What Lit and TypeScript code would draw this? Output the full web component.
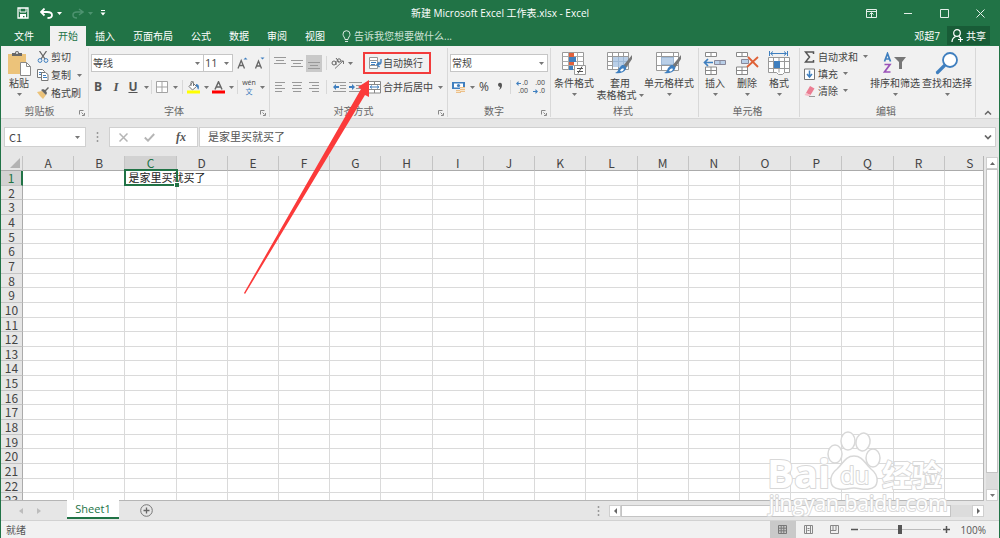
import { LitElement, html, svg, css, nothing } from "lit";
import { customElement, property, state } from "lit/decorators.js";
import { classMap } from "lit/directives/class-map.js";

const caret = html`<svg class="caret" width="5" height="3" viewBox="0 0 5 3" aria-hidden="true"><path d="M0 0h5L2.5 3z" fill="#777" /></svg>`;

const box = (w: number, h: number, body: unknown) =>
  html`<svg class="ico" width=${w} height=${h} viewBox="0 0 ${w} ${h}" fill="none" aria-hidden="true">${body}</svg>`;

const lines = (rows: number[][], color = "#999") =>
  rows.map(([x1, y, x2]) => svg`<path d="M${x1} ${y}.5H${x2}" stroke=${color} />`);

const brush = svg`<path d="M25 3 16 14l3 2L25 7z" fill="#777"/><path d="M15 13c3 0 5 2 4 4-2 4-7 5-11 4 3-1 3-3 4-5z" fill="#3f7fbf"/><path d="M13 19c1-2 2-3 4-2-1 2-2 3-4 2z" fill="#fff"/>`;

const icons = {
  save: box(12, 12, svg`<path d="M1 1h10v10H1z" stroke="#fff" stroke-width="1.3"/><path d="M3 1v4h6V1" stroke="#fff"/><path d="M3 7h6v4H7.500V9H6v2H3z" fill="#fff"/>`),
  undo: box(13, 11, svg`<path d="M4.500.5 1 4l3.500 3.500M1.500 4H7c3 0 5 1 5 3.200S10 10 7.500 10" stroke="#fff" stroke-width="1.800"/>`),
  redo: box(12, 11, svg`<path d="m7 1 4 3-4 3M11 4H5C2.500 4 1 5 1 7s1.500 3 4 3" stroke="#4d9370" stroke-width="1.5"/>`),
  more: box(6, 6, svg`<path d="M1 .5h4" stroke="#fff"/><path d="M.5 2.500h5L3 5.500z" fill="#fff"/>`),
  bulb: box(9, 13, svg`<path d="M3 9.500C3 7.500 1 6.500 1 4.200a3.500 3.500 0 0 1 7 0C8 6.500 6 7.500 6 9.500zM3 11.500h3" stroke="#dcebe3"/>`),
  ribbonMode: box(11, 9, svg`<path d="M.5.5h10v8H.5zM.5 2.500h10M5.500 8V4M3.500 5.500l2-2 2 2" stroke="#e4efe9"/>`),
  min: box(9, 9, svg`<path d="M0 4.500h8" stroke="#e4efe9"/>`),
  max: box(9, 9, svg`<path d="M.5.5h8v8h-8z" stroke="#e4efe9"/>`),
  close: box(9, 9, svg`<path d="m.5.5 8 8m0-8-8 8" stroke="#e4efe9"/>`),
  share: box(13, 13, svg`<circle cx="6" cy="4" r="3.300" stroke="#fff" stroke-width="1.200"/><path d="M1 13c0-3 1.500-4.500 3.500-5.500M8 7.500l1 1M7 10.500h5M9.500 8v5" stroke="#fff" stroke-width="1.200"/>`),
  paste: box(23, 25, svg`<path d="M0 3h18v20H0z" fill="#ecc37a"/><path d="M4 5V2h3a2 2 0 0 1 4 0h3v3z" fill="#686868"/><circle cx="9" cy="2" r="1" fill="#f1f1f1"/><path d="M12.500 11.500h6l4 4v9h-10z" fill="#fff" stroke="#8a8a8a"/><path d="M18.500 11.500v4h4" stroke="#8a8a8a"/>`),
  cut: box(12, 12, svg`<path d="M2.500 0 8 8M9.500 0 4 8" stroke="#666" stroke-width="1.300"/><circle cx="3" cy="9.500" r="1.900" stroke="#3f7fbf"/><circle cx="9" cy="9.500" r="1.900" stroke="#3f7fbf"/>`),
  copy: box(12, 12, svg`<path d="M.5.5h5l2 2v6h-7z" fill="#fff" stroke="#777"/><path d="M2 3.500h3M2 5.500h3" stroke="#3f7fbf"/><path d="M4.500 3.500h4l2.500 2v6H4.500z" fill="#fff" stroke="#777"/><path d="M6 6.500h3M6 8.500h4" stroke="#3f7fbf"/>`),
  painter: box(12, 12, svg`<path d="m0 5 5-1 4 4-3 4C4 10 2 8 0 5z" fill="#ecc37a"/><path d="m4 3 2-1 2 1 3-3 1 1-3 3 1 2-1 2z" fill="#666"/>`),
  grow: box(11, 12, svg`<path d="M1 11.500 4.200 3.500 7.500 11.500M2 8.500h4.500" stroke="#666" stroke-width="1.300"/><path d="m6.500 2.500 2-2 2 2z" fill="#3f7fbf"/>`),
  shrink: box(11, 12, svg`<path d="M1.500 11.500 4.500 4 7.500 11.500M2.500 9h4" stroke="#666" stroke-width="1.300"/><path d="m6.500.5 2 2 2-2z" fill="#3f7fbf"/>`),
  borders: box(12, 12, svg`<path d="M.5.5h11v11H.5zM6 .5v11M.5 6h11" stroke="#a3a3a3" fill="#fff"/>`),
  fill: box(13, 13, svg`<path d="m5.500 1.500 4 4-4 3.500-3.500-3.500z" fill="#fff" stroke="#777"/><path d="M4 5V1.500a1.200 1.200 0 0 1 2.500 0V5" stroke="#777"/><path d="M9 3c3 0 3.500 3 2.500 5.500C10 8 11 6 9 5z" fill="#3f7fbf"/><path d="M0 9.500h13v3H0z" fill="#ffff00"/>`),
  fontColor: box(13, 13, svg`<path d="M3 8.500 6.500.8 10 8.500M4 6h5" stroke="#666" stroke-width="1.500"/><path d="M0 9.500h13v3H0z" fill="#fe0000"/>`),
  orient: box(14, 12, svg`<circle cx="3" cy="6" r="2" stroke="#666"/><path d="M5 4v4M5 1l3 4" stroke="#666"/><circle cx="8" cy="3.500" r="1.700" stroke="#666"/><path d="M4 11.500 12 4M9.500 4H12.500V7" stroke="#777"/>`),
  outdent: box(13, 12, svg`${lines([[0, 1, 13], [7, 4, 13], [7, 7, 13], [0, 10, 13]])}<path d="M0 6l3-3v2h3v2H3v2z" fill="#3f7fbf"/>`),
  indent: box(13, 12, svg`${lines([[0, 1, 13], [7, 4, 13], [7, 7, 13], [0, 10, 13]])}<path d="M6 6 3 3v2H0v2h3v2z" fill="#3f7fbf"/>`),
  wrap: box(13, 13, svg`<path d="M.5.5h8v3h-8zM.5 3.500h8v5h-8zM.5 8.500h8v3h-8z" fill="#fff" stroke="#999"/><path d="M2 5.500h5M2 7.500h4" stroke="#3f7fbf"/><path d="M12 2v3c0 2-1 2.500-4 2.500M10.500 5 8 7.500l2.500 2.500" stroke="#3f7fbf" stroke-width="1.400"/>`),
  merge: box(14, 13, svg`<path d="M.5.5h12v11.500H.5zM.5 3.500h12M.5 8.500h12M6.500.5v3M6.500 8.500V12" fill="#fff" stroke="#888"/><path d="M2 6h9M4 4.500 2.200 6 4 7.500M9 4.500 10.800 6 9 7.500" stroke="#3f7fbf"/>`),
  money: box(14, 13, svg`<path d="M0 1h13v7H0z" fill="#3f7fbf"/><path d="M2 2.500h9v4H2z" fill="#fff"/><circle cx="6.500" cy="4.500" r="1.600" fill="#3f7fbf"/><path d="M4 9h5v3H4zM8 6h5v5H8z" fill="#ecc08a"/><path d="M4 10.500h4M8 7.500h5M8 9.500h5" stroke="#f8e6cc"/>`),
  comma: box(6, 10, svg`<path d="M1 2.500a2 2 0 0 1 4 .5c0 2-1 4-3 5 .7-1 1-2 1-3-1 0-2-1-2-2.500z" fill="#555"/>`),
  cond: box(24, 23, svg`<path d="M.5.5h21v17H.5z" fill="#fff" stroke="#999"/><path d="M.5 4.500h21M.5 9.500h21M.5 13.500h21M6.500.5v17M15.500.5v17" stroke="#aaa"/><path d="M7 1h5v4H7zM7 10h5v3H7z" fill="#e0603c"/><path d="M7 5h7v5H7zM7 14h4v4H7z" fill="#3f7fbf"/><path d="M12.500 13.500h11v9h-11z" fill="#fff" stroke="#999"/><path d="M15 16.500h6M15 19.500h6M20 14.500l-4 7" stroke="#555"/>`),
  tableFmt: box(26, 23, svg`<path d="M.5 .5h21v17H.5zM.5 4.500h21M.5 9.500h21M.5 13.500h21M5.500.5v17M11.500.5v17M16.500.5v17" fill="#fff" stroke="#999"/><path d="M6 5h15v10H6z" fill="#b9cfe8"/><path d="M6 9.500h15M11.500 5v10M16.500 5v10" stroke="#9db8d6"/>${brush}`),
  cellStyle: box(26, 23, svg`<path d="M.5.5h22v18H.5zM.5 4.500h22M.5 13.500h22M5.500.5v18M17.500.5v18" fill="#fff" stroke="#999"/><path d="M5.500 5.500h12v7h-12z" fill="#b9cfe8" stroke="#9db8d6"/>${brush}`),
  insert: box(24, 23, svg`<path d="M2.500.5h11v4h-11zM8 .5v4M2.500 15h11v7.500h-11zM8 15v7.500M2.500 18.500h11" fill="#fff" stroke="#888"/><path d="M11.500 8.500h11v4h-11zM17 8.500v4" fill="#b9cfe8" stroke="#889"/><path d="M10 10.500H2M5 7l-3.500 3.500L5 14" stroke="#3f7fbf" stroke-width="1.700"/>`),
  remove: box(24, 23, svg`<path d="M1.500.5h11v4h-11zM7 .5v4M1.500 15h11v7.500h-11zM7 15v7.500M1.500 18.500h11" fill="#fff" stroke="#888"/><path d="M6.500 7.500h7v4h-7z" fill="#b9cfe8" stroke="#889"/><path d="m13 5 10 10M23 5 12 15" stroke="#df6035" stroke-width="1.800"/>`),
  format: box(23, 24, svg`<path d="M1.500 0v5M19.500 0v5M3 2.500h15M5 .5l-2.500 2L5 4.500M16 .5l2.500 2-2.500 2" stroke="#3f7fbf"/><path d="M.5 6.500h21v15h-5l-2 2h-4l-2-2h-8zM.5 10.500h21M.5 17.500h21M5.500 6.500v15M11 6.500v15M16.500 6.500v15" fill="#fff" stroke="#999"/><path d="M6 10h6v7H6z" fill="#3f7fbf"/>`),
  sum: box(11, 12, svg`<path d="M9.500 3V1H1.500l4 5-4 5h8V9" stroke="#555" stroke-width="1.500"/>`),
  down: box(11, 12, svg`<path d="M.5 1h10v10.500H.5z" fill="#fff" stroke="#777"/><path d="M5.500 2.500v6M3 6l2.500 3L8 6" stroke="#3f7fbf" stroke-width="1.500"/>`),
  erase: box(11, 12, svg`<path d="m6 1 4.500 2.500L6.500 10 2 8z" fill="#eb7d92"/><path d="M2 8l4.500 2-1 1.500L.5 10z" fill="#f6bcc7"/><path d="M5 11.500h6" stroke="#999"/>`),
  sort: box(24, 23, svg`<path d="M1.500 9.500 4.500 1.500 7.500 9.500M2.500 7h4" stroke="#3f7fbf" stroke-width="1.700"/><path d="M1.500 12.500h5.500L1.500 20h6" stroke="#9a52b8" stroke-width="1.700"/><path d="M11 5h12l-4 5v7h-3v-7z" fill="#777"/>`),
  find: box(24, 23, svg`<circle cx="15" cy="8" r="7" fill="#fff" stroke="#3f7fbf" stroke-width="1.800"/><path d="m9.500 13.500-7 7" stroke="#3f7fbf" stroke-width="3.200" stroke-linecap="round"/>`),
  x: box(9, 9, svg`<path d="m.5.5 8 8m0-8-8 8" stroke="#b5b5b5" stroke-width="1.500"/>`),
  check: box(11, 9, svg`<path d="m.8 4.500 3.200 3.200L10.200 1" stroke="#b5b5b5" stroke-width="1.900"/>`),
  launcher: box(6, 6, svg`<path d="M.5 4.500v-4h4M2.500 2.500l2 2M5.500 3v2.500H3" stroke="#888"/>`),
  dots: box(3, 10, svg`<path d="M1.500 0v10" stroke="#999" stroke-width="1.500" stroke-dasharray="2 2"/>`),
  up: box(5, 3, svg`<path d="M0 3h5L2.500 0z" fill="#666"/>`),
  left: box(3, 6, svg`<path d="M3 0v6L0 3z" fill="#666"/>`),
  right: box(3, 6, svg`<path d="M0 0v6l3-3z" fill="#666"/>`),
  prev: box(4, 6, svg`<path d="M4 0v6L0 3z" fill="#bdbdbd"/>`),
  next: box(4, 6, svg`<path d="M0 0v6l4-3z" fill="#bdbdbd"/>`),
  chevUp: box(8, 5, svg`<path d="m1 4.500 3-3 3 3" stroke="#666" stroke-width="1.500"/>`),
  chevDown: box(8, 5, svg`<path d="m1 .5 3 3 3-3" stroke="#666" stroke-width="1.700"/>`),
  add: box(13, 13, svg`<circle cx="6.500" cy="6.500" r="5.800" stroke="#777"/><path d="M6.500 3.500v6M3.500 6.500h6" stroke="#666" stroke-width="1.300"/>`),
  viewNormal: box(9, 9, svg`<path d="M.5.5h8v8h-8zM3.200.5v8M5.800.5v8M.5 3.200h8M.5 5.800h8" stroke="#777"/>`),
  viewPage: box(9, 9, svg`<path d="M.5.5h8v8h-8zM2.500.5v8M6.500.5v8M3.500 3.500h2M3.500 5.500h2" stroke="#888"/>`),
  viewBreak: box(9, 9, svg`<path d="M.5.5h8v8h-8zM3 .5v5M6 .5v5M.5 5.500H6" stroke="#888"/>`),
  minus: box(7, 7, svg`<path d="M0 3.500h7" stroke="#555" stroke-width="1.500"/>`),
  plus: box(7, 7, svg`<path d="M0 3.500h7M3.500 0v7" stroke="#555" stroke-width="1.500"/>`),
};

const align = (rows: number[][]) => box(12, 12, lines(rows));

const base = css`
  * { box-sizing: border-box; }
  button, select, input { font: inherit; color: inherit; margin: 0; padding: 0; border: 0; background: none; border-radius: 0; }
  button { display: flex; align-items: center; justify-content: center; white-space: nowrap; flex: none; }
  svg { display: block; flex: none; }
`;

@customElement("ribbon-group")
export class RibbonGroup extends LitElement {
  @property() caption = "";
  @property({ type: Boolean }) launcher = false;
  static styles = [base, css`
    :host { display: flex; flex-direction: column; border-right: 1px solid #d8d8d8; height: 69px; flex: none; }
    .body { flex: 1; min-height: 0; }
    .foot { display: flex; align-items: center; height: 12px; color: #666; padding-right: 3px; }
    .name { flex: 1; text-align: center; line-height: 12px; }
    .launch { width: 7px; height: 8px; align-self: flex-end; }
  `];
  render() {
    return html`<div class="body"><slot></slot></div>
      <div class="foot"><span class="name">${this.caption}</span>
      ${this.launcher ? html`<button class="launch" aria-label="${this.caption}设置">${icons.launcher}</button>` : nothing}</div>`;
  }
}

@customElement("excel-ribbon")
export class ExcelRibbon extends LitElement {
  static styles = [base, css`
    :host { display: flex; padding: 2px 0 1px; background: #f1f1f1; border-bottom: 1px solid #d6d6d6; color: #444; line-height: 12px; }
    .clip { width: 88px; }
    .font { width: 181px; }
    .alignment { width: 178px; }
    .number { width: 103px; }
    .styles { width: 148px; }
    .cells { width: 101px; }
    .edit { width: 176px; }
    .cols { display: flex; height: 54px; }
    .stack { display: flex; flex-direction: column; }
    .stack button { justify-content: flex-start; gap: 2px; height: 18px; }
    .stack .caret { margin-left: 4px; }
    .lead { width: 69px; padding-left: 4px; }
    .lead button { height: 17px; gap: 3px; }
    .lead .caret { margin-left: 2px; }
    .row { display: flex; align-items: center; height: 18px; }
    .row.first { height: 30px; }
    .big { flex-direction: column; justify-content: flex-start; height: 54px; padding-top: 3px; }
    .big .pic { display: grid; place-items: center; height: 24px; margin-bottom: 2px; }
    .big .caret { margin-top: 4px; }
    .big .line { display: flex; align-items: center; gap: 2px; line-height: 12px; }
    .big .line .caret { margin-top: 0; }
    .w8 { width: 8px; } .w10 { width: 10px; } .w12 { width: 12px; } .w14 { width: 14px; } .w16 { width: 16px; } .w18 { width: 18px; }
    .w32 { width: 32px; } .w36 { width: 36px; } .w46 { width: 46px; } .w52 { width: 52px; }
    .sep { width: 1px; height: 14px; background: #d8d8d8; margin: 0 4px; flex: none; }
    .sep.left { margin-left: 0; }
    .sep.tight { margin: 0 2px; }
    .select { display: grid; align-items: center; background: #fff; border: 1px solid #c6c6c6; height: 18px; }
    .select > * { grid-area: 1 / 1; }
    .select select { appearance: none; width: 100%; height: 16px; padding-left: 1px; outline: 0; }
    .select .caret { justify-self: end; margin-right: 3px; pointer-events: none; }
    .select.size { width: 30px; margin-left: -1px; font-size: 11px; }
    .select.face { width: 113px; }
    .select.fmt { width: 98px; }
    .padl { padding-left: 2px; }
    .glyph { font: bold 12px/16px "Open Sans", "Noto Sans", sans-serif; color: #555; }
    .ital { font: italic bold 13px/16px "Liberation Serif", serif; color: #555; }
    .under { text-decoration: underline; }
    .on { background: #c9c9c9; height: 17px; }
    .pct { font-size: 12px; }
    .wen { flex-direction: column; line-height: 9px; font-size: 7px; }
    .wen .han { color: #3f7fbf; }
    .dec { flex-direction: column; align-items: flex-end; font: 7px/8px "Open Sans", sans-serif; width: 17px; padding-right: 2px; }
    .dec span { display: flex; align-items: center; gap: 1px; }
    .noted { position: relative; gap: 1px; width: 68px; height: 22px; margin-left: 8px; justify-content: flex-start; padding-left: 6px; }
    .ring { position: absolute; inset: 0; border: 2px solid #f23c3c; pointer-events: none; }
    .arrow { position: absolute; right: 60px; top: 28px; pointer-events: none; z-index: 4; }
    .merge { gap: 1px; margin-left: 5px; }
    .merge .caret { margin-left: 4px; }
    .end { flex: 1; display: flex; justify-content: center; align-items: flex-end; padding-bottom: 2px; }
  `];

  private big(label: string, icon: unknown, width: string, second = "") {
    return html`<button class="big ${width}">
      <span class="pic">${icon}</span><span class="line">${label}</span>
      ${second ? html`<span class="line">${second}${caret}</span>` : caret}
    </button>`;
  }

  render() {
    return html`
      <ribbon-group class="clip" caption="剪贴板" launcher>
        <div class="cols">
          ${this.big("粘贴", icons.paste, "w36")}
          <div class="stack">
            <button>${icons.cut}剪切</button>
            <button>${icons.copy}复制${caret}</button>
            <button>${icons.painter}格式刷</button>
          </div>
        </div>
      </ribbon-group>
      <ribbon-group class="font" caption="字体" launcher>
        <div class="row first padl">
          <div class="select face"><select aria-label="字体"><option>等线</option></select>${caret}</div>
          <div class="select size"><select aria-label="字号"><option>11</option></select>${caret}</div>
          <button class="w18" aria-label="增大字号">${icons.grow}</button>
          <button class="w16" aria-label="减小字号">${icons.shrink}</button>
        </div>
        <div class="row">
          <button class="w18 glyph">B</button>
          <button class="w18 ital">I</button>
          <button class="w16 glyph under">U</button>
          <button class="w10" aria-label="下划线选项">${caret}</button>
          <span class="sep left"></span>
          <button class="w12" aria-label="边框">${icons.borders}</button>
          <button class="w14" aria-label="边框选项">${caret}</button>
          <span class="sep left"></span>
          <button aria-label="填充颜色">${icons.fill}</button>
          <button class="w12" aria-label="填充选项">${caret}</button>
          <button aria-label="字体颜色">${icons.fontColor}</button>
          <button class="w12" aria-label="颜色选项">${caret}</button>
          <span class="sep left"></span>
          <button class="wen w14"><span>wén</span><span class="han">文</span></button>
          <button class="w12" aria-label="拼音选项">${caret}</button>
        </div>
      </ribbon-group>
      <ribbon-group class="alignment" caption="对齐方式" launcher>
        <div class="row first padl">
          <button class="w16" aria-label="顶端对齐">${align([[0, 0, 12], [2, 3, 10], [0, 6, 12]])}</button>
          <button class="w18" aria-label="垂直居中">${align([[0, 3, 12], [2, 6, 10], [0, 9, 12]])}</button>
          <button class="w16 on" aria-label="底端对齐">${align([[0, 5, 12], [2, 8, 10], [0, 11, 12]])}</button>
          <span class="sep"></span>
          <button aria-label="方向">${icons.orient}</button>
          <button class="w10" aria-label="方向选项">${caret}</button>
          <button class="noted">${icons.wrap}自动换行
            <span class="ring"></span>
            <svg class="arrow" width="128" height="216" viewBox="0 0 128 216" aria-hidden="true"><path d="M126 0 115 7l3 2L1 213l1 1L122 15l4 2z" fill="#fb3a3a" /></svg>
          </button>
        </div>
        <div class="row padl">
          <button class="w16" aria-label="左对齐">${align([[1, 1, 11], [1, 4, 8], [1, 7, 11], [1, 10, 8]])}</button>
          <button class="w18" aria-label="居中">${align([[1, 1, 11], [2, 4, 10], [1, 7, 11], [2, 10, 10]])}</button>
          <button class="w16" aria-label="右对齐">${align([[1, 1, 11], [4, 4, 11], [1, 7, 11], [4, 10, 11]])}</button>
          <span class="sep"></span>
          <button class="w16" aria-label="减少缩进量">${icons.outdent}</button>
          <button class="w16" aria-label="增加缩进量">${icons.indent}</button>
          <button class="merge">${icons.merge}合并后居中${caret}</button>
        </div>
      </ribbon-group>
      <ribbon-group class="number" caption="数字" launcher>
        <div class="row first padl">
          <div class="select fmt"><select aria-label="数字格式"><option>常规</option></select>${caret}</div>
        </div>
        <div class="row padl">
          <button class="w18" aria-label="会计格式">${icons.money}</button>
          <button class="w8" aria-label="会计格式选项">${caret}</button>
          <button class="w16 pct">%</button>
          <button class="w16" aria-label="千位分隔">${icons.comma}</button>
          <span class="sep tight"></span>
          <button class="dec"><span>${box(5, 5, svg`<path d="M0 2.500 2.500 0v2H5v1H2.500v2z" fill="#3f7fbf"/>`)}.0</span><span>.00</span></button>
          <button class="dec"><span>.00</span><span>${box(5, 5, svg`<path d="M5 2.500 2.500 0v2H0v1h2.500v2z" fill="#3f7fbf"/>`)}.0</span></button>
        </div>
      </ribbon-group>
      <ribbon-group class="styles" caption="样式">
        <div class="cols">
          ${this.big("条件格式", icons.cond, "w46")}
          ${this.big("套用", icons.tableFmt, "w46", "表格格式")}
          ${this.big("单元格样式", icons.cellStyle, "w52")}
        </div>
      </ribbon-group>
      <ribbon-group class="cells" caption="单元格">
        <div class="cols">
          ${this.big("插入", icons.insert, "w32")}
          ${this.big("删除", icons.remove, "w32")}
          ${this.big("格式", icons.format, "w32")}
        </div>
      </ribbon-group>
      <ribbon-group class="edit" caption="编辑">
        <div class="cols">
          <div class="stack lead">
            <button>${icons.sum}自动求和${caret}</button>
            <button>${icons.down}填充${caret}</button>
            <button>${icons.erase}清除${caret}</button>
          </div>
          ${this.big("排序和筛选", icons.sort, "w52")}
          ${this.big("查找和选择", icons.find, "w52")}
        </div>
      </ribbon-group>
      <div class="end"><button aria-label="折叠功能区">${icons.chevUp}</button></div>
    `;
  }
}

@customElement("excel-sheet")
export class ExcelSheet extends LitElement {
  @property() text = "";
  private cols = "ABCDEFGHIJKLMNOPQRS".split("");
  private rows = Array.from({ length: 23 }, (_, i) => i + 1);
  static styles = [base, css`
    :host { display: block; overflow: hidden; background: #fff; border-right: 1px solid #b5b5b5; border-bottom: 1px solid #b5b5b5; }
    .grid { display: grid; width: calc(100% + 13px); height: calc(100% + 8px); grid-template-columns: 22px repeat(19, minmax(0, 1fr)); grid-template-rows: 15px repeat(23, minmax(0, 1fr)); font-family: "Noto Sans CJK SC", sans-serif; font-size: 12px; }
    .group { display: contents; }
    .cell { padding: 0; border-right: 1px solid #dadada; border-bottom: 1px solid #dadada; font-weight: normal; min-width: 0; }
    .head { background: #e6e6e6; color: #444; text-align: center; display: grid; place-items: center; line-height: 14px; border-color: #c4c4c4; border-bottom-color: #ababab; }
    .side { border-color: #c4c4c4; border-right-color: #ababab; }
    .on { background: #d2d2d2; color: #217346; border-bottom-color: #217346; }
    .on.side { border-right: 2px solid #217346; border-bottom-color: #c4c4c4; }
    .corner { place-items: end; padding: 0 2px 2px 0; }
    .picked { position: relative; color: #222; font-size: 11px; line-height: 15px; padding-left: 3px; white-space: nowrap; overflow: visible; z-index: 1; display: flex; align-items: center; }
    .mark { position: absolute; inset: -2px -2px -1px -1px; border: 2px solid #217346; }
    .mark::after { content: ""; position: absolute; right: -3px; bottom: -3px; width: 4px; height: 4px; background: #217346; border: solid #fff; border-width: 1px 0 0 1px; }
  `];
  render() {
    return html`<table class="grid">
      <thead class="group"><tr class="group">
        <td class="cell head corner">${box(10, 10, svg`<path d="M10 0v10H0z" fill="#b3b3b3"/>`)}</td>
        ${this.cols.map((c) => html`<th scope="col" class=${classMap({ cell: true, head: true, on: c === "C" })}>${c}</th>`)}
      </tr></thead>
      <tbody class="group">
        ${this.rows.map((r) => html`<tr class="group">
          <th scope="row" class=${classMap({ cell: true, head: true, side: true, on: r === 1 })}>${r}</th>
          ${this.cols.map((c) => r === 1 && c === "C"
            ? html`<td class="cell picked">${this.text}<span class="mark"></span></td>`
            : html`<td class="cell"></td>`)}
        </tr>`)}
      </tbody>
    </table>`;
  }
}

@customElement("app-root")
export class AppRoot extends LitElement {
  @state() private text = "是家里买就买了";
  @state() private zoom = 100;

  static styles = [base, css`
    :host { display: flex; flex-direction: column; position: relative; height: 100vh; min-height: 300px; overflow: hidden; border: solid #217346; border-width: 0 1px 1px; background: #e6e6e6; color: #444; font: 10px/12px "Open Sans", "Noto Sans CJK SC", sans-serif; }
    .title { display: grid; grid-template-columns: 1fr auto 1fr; align-items: center; height: 26px; flex: none; background: #217346; color: #fff; }
    .quick { display: flex; align-items: center; padding-left: 16px; }
    .quick .undo { margin-left: 11px; }
    .quick .redo { margin-left: 8px; }
    .quick .drop { width: 10px; height: 12px; margin-left: 1px; }
    .quick .more { margin-left: 5px; }
    .light path { fill: #fff; }
    .dim path { fill: #4d9370; }
    .name { margin: 0; font-size: 10px; font-weight: normal; }
    .win { display: flex; justify-content: flex-end; padding-right: 14px; gap: 27px; }
    .tabs { display: flex; height: 20px; flex: none; background: #217346; color: #fff; }
    .tab { padding: 0 9px; }
    .tab.file { padding: 0 16px 0 13px; }
    .tab.sel { background: #f1f1f1; color: #217346; padding: 0 8px; }
    .tell { gap: 3px; margin-left: 8px; color: #cfe3d8; }
    .user { margin-left: auto; display: flex; align-items: center; padding-right: 7px; }
    .share { background: #185c37; height: 19px; padding: 0 4px; gap: 2px; margin-right: 9px; width: 43px; }
    .formula { display: flex; height: 20px; margin: 8px 3px 9px; flex: none; }
    .field { background: #fff; border: 1px solid #d0d0d0; height: 20px; display: flex; align-items: center; }
    .cellname { width: 82px; padding: 0 5px 0 4px; font: 11px/16px "Noto Sans CJK SC", sans-serif; }
    .cellname input { flex: 1; min-width: 0; outline: 0; }
    .grip { width: 23px; display: grid; place-items: center; }
    .fx { width: 89px; justify-content: space-between; padding: 0 6px 0 9px; }
    .fn { font: italic bold 12px/16px "Liberation Serif", serif; width: 20px; color: #555; }
    .entry { flex: 1; margin-left: 1px; padding: 0 3px 0 8px; font-size: 11px; }
    .entry input { flex: 1; min-width: 0; outline: 0; color: #555; }
    .work { display: flex; flex: 1; min-height: 0; }
    .work excel-sheet { flex: 1; min-width: 0; }
    .vbar { display: flex; flex-direction: column; width: 15px; padding: 1px 1px 0 2px; }
    .arrowbtn { background: #fff; border: 1px solid #cfcfcf; width: 12px; height: 12px; flex: none; }
    .vtrack { flex: 1; background: #dcdcdc; width: 12px; display: flex; }
    .vthumb { background: #fff; border: 1px solid #c4c4c4; width: 12px; height: 95%; }
    .sheets { display: flex; height: 19px; flex: none; align-items: center; padding-right: 15px; }
    .nav { display: flex; gap: 14px; width: 66px; padding-left: 18px; }
    .sheet { align-self: flex-start; height: 17px; width: 52px; margin-top: -1px; background: #fff; color: #217346; border-bottom: 2px solid #217346; font-size: 11px; box-sizing: content-box; }
    .add { margin-left: 21px; }
    .sp { flex: 1; }
    .hgrip { width: 22px; display: grid; place-items: center; }
    .hbar { display: flex; width: 375px; }
    .htrack { flex: 1; background: #dcdcdc; height: 12px; }
    .hthumb { background: #fff; border: 1px solid #c4c4c4; width: 94%; height: 12px; }
    .status { display: flex; align-items: center; height: 18px; flex: none; background: #f1f1f1; border-top: 1px solid #d2d2d2; padding: 0 13px 0 5px; color: #555; }
    .view { width: 26px; height: 17px; }
    .view.cur { background: #c9c9c9; }
    .zoomer { display: flex; align-items: center; gap: 2px; margin-left: 3px; }
    .range { appearance: none; width: 81px; height: 9px; background: linear-gradient(#bbb, #bbb) center / 100% 1px no-repeat; }
    .range::-webkit-slider-thumb { appearance: none; width: 4px; height: 9px; background: #555; border: 0; border-radius: 0; }
    .pct { margin-left: 11px; }
    .logo { position: absolute; right: 50px; bottom: 16px; pointer-events: none; z-index: 5; }
    .logo text { font-family: "Open Sans", "Noto Sans CJK SC", sans-serif; fill: #fff; stroke: #d8d8d8; stroke-width: 2px; stroke-linejoin: round; paint-order: stroke; }
  `];

  render() {
    return html`
      <header class="title">
        <div class="quick">
          <button aria-label="保存">${icons.save}</button>
          <button class="undo" aria-label="撤消">${icons.undo}</button>
          <button class="drop light" aria-label="撤消选项">${caret}</button>
          <button class="redo" aria-label="恢复">${icons.redo}</button>
          <button class="drop dim" aria-label="恢复选项">${caret}</button>
          <button class="more" aria-label="自定义">${icons.more}</button>
        </div>
        <h1 class="name">新建 Microsoft Excel 工作表.xlsx - Excel</h1>
        <div class="win">
          <button aria-label="功能区显示选项">${icons.ribbonMode}</button>
          <button aria-label="最小化">${icons.min}</button>
          <button aria-label="最大化">${icons.max}</button>
          <button aria-label="关闭">${icons.close}</button>
        </div>
      </header>
      <nav class="tabs">
        <button class="tab file">文件</button>
        <button class="tab sel">开始</button>
        ${["插入", "页面布局", "公式", "数据", "审阅", "视图"].map((t) => html`<button class="tab">${t}</button>`)}
        <button class="tell">${icons.bulb}告诉我您想要做什么...</button>
        <span class="user">邓超7</span>
        <button class="share">${icons.share}共享</button>
      </nav>
      <excel-ribbon></excel-ribbon>
      <div class="formula">
        <div class="field cellname"><input aria-label="名称框" .value=${"C1"} />${caret}</div>
        <span class="grip">${icons.dots}</span>
        <div class="field fx">
          <button aria-label="取消">${icons.x}</button>
          <button aria-label="输入">${icons.check}</button>
          <button class="fn">fx</button>
        </div>
        <div class="field entry">
          <input aria-label="编辑栏" .value=${this.text} @input=${(e: Event) => (this.text = (e.target as HTMLInputElement).value)} />
          ${icons.chevDown}
        </div>
      </div>
      <main class="work">
        <excel-sheet .text=${this.text}></excel-sheet>
        <div class="vbar">
          <button class="arrowbtn" aria-label="向上滚动">${icons.up}</button>
          <div class="vtrack"><div class="vthumb"></div></div>
          <button class="arrowbtn" aria-label="向下滚动">${caret}</button>
        </div>
      </main>
      <div class="sheets">
        <div class="nav"><button aria-label="上一个">${icons.prev}</button><button aria-label="下一个">${icons.next}</button></div>
        <button class="sheet">Sheet1</button>
        <button class="add" aria-label="新工作表">${icons.add}</button>
        <span class="sp"></span>
        <span class="hgrip">${icons.dots}</span>
        <div class="hbar">
          <button class="arrowbtn" aria-label="向左滚动">${icons.left}</button>
          <div class="htrack"><div class="hthumb"></div></div>
          <button class="arrowbtn" aria-label="向右滚动">${icons.right}</button>
        </div>
      </div>
      <footer class="status">
        <span>就绪</span><span class="sp"></span>
        <button class="view cur" aria-label="普通">${icons.viewNormal}</button>
        <button class="view" aria-label="页面布局视图">${icons.viewPage}</button>
        <button class="view" aria-label="分页预览">${icons.viewBreak}</button>
        <div class="zoomer">
          <button aria-label="缩小">${icons.minus}</button>
          <input class="range" type="range" min="0" max="200" aria-label="显示比例" .value=${String(this.zoom)}
            @input=${(e: Event) => (this.zoom = Number((e.target as HTMLInputElement).value))} />
          <button aria-label="放大">${icons.plus}</button>
        </div>
        <span class="pct">${this.zoom}%</span>
      </footer>
      <svg class="logo" width="184" height="92" viewBox="0 0 184 92" role="img" aria-label="Baidu">
        <text x="2" y="58" font-size="40" font-weight="700">Bai</text>
        <g fill="#fff" stroke="#d8d8d8" stroke-width="1.500">
          <ellipse cx="70" cy="24" rx="7" ry="9"/><ellipse cx="83" cy="11" rx="7" ry="9"/>
          <ellipse cx="98" cy="12" rx="7" ry="9" transform="rotate(12 98 12)"/><ellipse cx="108" cy="28" rx="7" ry="9"/>
          <path d="M89 26c9 0 11 8 17 13 9 7 8 19-2 20-5 1-10-1-15-1s-10 2-15 1c-10-1-11-13-2-20 6-5 8-13 17-13z"/>
        </g>
        <text x="75" y="54" font-size="24" font-weight="400">du</text>
        <text x="117" y="56" font-size="30" font-weight="700">经验</text>
        <text x="4" y="81" font-size="21" font-weight="400">jingyan.baidu.com</text>
      </svg>
    `;
  }
}
